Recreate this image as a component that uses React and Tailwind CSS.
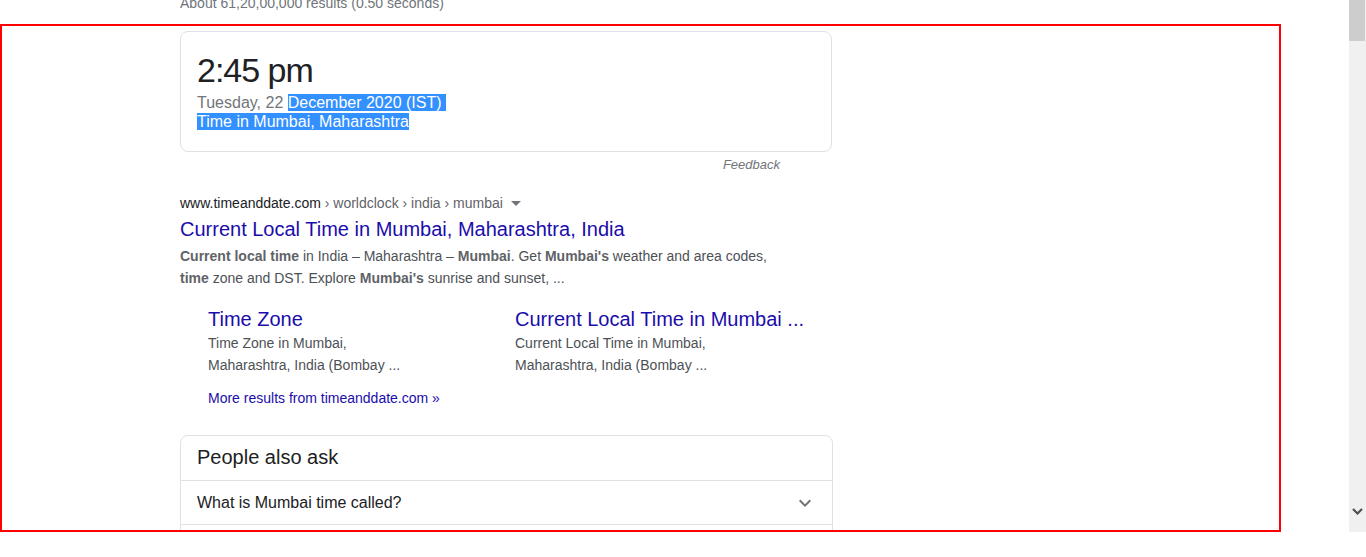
import React from "react";

function Chevron({ className }) {
  return (
    <svg viewBox="0 0 24 24" width="24" height="24" className={className} fill="currentColor">
      <path d="M7.41 8.59 12 13.17l4.59-4.58L18 10l-6 6-6-6z" />
    </svg>
  );
}

export default function App() {
  return (
    <div className="relative w-[1366px] h-[557px] bg-white overflow-hidden font-['Liberation_Sans',Arial,sans-serif]">
      <div className="flex h-[532px]">
        <div className="relative w-[1349px] h-[532px] overflow-hidden">
          <div className="ml-[180px] w-[653px] -mt-[7px]">
            <div className="h-[20px] leading-[20px] text-[14px] text-[#70757a]">
              About 61,20,00,000 results (0.50 seconds)
            </div>

            <div className="mt-[18px] w-[652px] rounded-[8px] border border-[#dfe1e5] px-[16px] pt-[16px] pb-[20px]">
              <div className="text-[34px] leading-[44px] tracking-[-1px] text-[#202124]">2:45 pm</div>
              <div className="mt-[1px] text-[16px] leading-[19px] text-[#70757a]">
                Tuesday, 22 <span className="bg-[#3390ff] text-white">December 2020 (IST)&nbsp;</span>
                <br />
                <span className="bg-[#3390ff] text-white">Time in Mumbai, Maharashtra</span>
              </div>
            </div>

            <div className="mt-[5px] w-[652px] pr-[52px] text-right text-[13px] leading-[16px] italic text-[#70757a]">
              Feedback
            </div>

            <div className="mt-[20px] flex items-center text-[14px] leading-[20px]">
              <span className="text-[#202124]">www.timeanddate.com</span>
              <span className="text-[#5f6368]">&nbsp;› worldclock › india › mumbai</span>
              <svg width="10" height="5" viewBox="0 0 10 5" className="ml-[8px] mt-[1px]">
                <path d="M0 0h10L5 5z" fill="#70757a" />
              </svg>
            </div>
            <div className="mt-[3px] text-[20px] leading-[26px] text-[#1a0dab]">
              Current Local Time in Mumbai, Maharashtra, India
            </div>
            <div className="mt-[3px] w-[600px] text-[14px] leading-[22px] text-[#4d5156]">
              <b className="text-[#5f6368]">Current local time</b> in India – Maharashtra – <b className="text-[#5f6368]">Mumbai</b>. Get <b className="text-[#5f6368]">Mumbai's</b> weather and area codes,
              <br />
              <b className="text-[#5f6368]">time</b> zone and DST. Explore <b className="text-[#5f6368]">Mumbai's</b> sunrise and sunset, ...
            </div>

            <div className="mt-[17px] ml-[28px] flex">
              <div className="w-[307px]">
                <div className="text-[20px] leading-[26px] text-[#1a0dab]">Time Zone</div>
                <div className="text-[14px] leading-[22px] text-[#4d5156]">
                  Time Zone in Mumbai,
                  <br />
                  Maharashtra, India (Bombay ...
                </div>
              </div>
              <div className="w-[310px]">
                <div className="text-[20px] leading-[26px] text-[#1a0dab] whitespace-nowrap">Current Local Time in Mumbai ...</div>
                <div className="text-[14px] leading-[22px] text-[#4d5156]">
                  Current Local Time in Mumbai,
                  <br />
                  Maharashtra, India (Bombay ...
                </div>
              </div>
            </div>
            <div className="mt-[11px] ml-[28px] text-[14px] leading-[22px] text-[#1a0dab]">
              More results from timeanddate.com »
            </div>

            <div className="mt-[26px] w-[653px] rounded-[8px] border border-[#dfe1e5]">
              <div className="px-[16px] pt-[8px] pb-[10px] text-[20px] leading-[26px] text-[#202124] border-b border-[#dfe1e5]">
                People also ask
              </div>
              <div className="flex items-center justify-between pl-[16px] pr-[15px] pt-[12px] pb-[11px] border-b border-[#dfe1e5]">
                <span className="text-[16px] leading-[20px] text-[#202124]">What is Mumbai time called?</span>
                <Chevron className="text-[#70757a] w-[24px] h-[24px] -my-[2px]" />
              </div>
              <div className="px-[16px] py-[12px] text-[16px] leading-[20px] text-[#202124]">
                What is the current time in India?
              </div>
            </div>
          </div>

          <div className="absolute left-0 top-[24px] w-[1281px] h-[508px] border-2 border-[#ff0000] pointer-events-none" />
        </div>

        <div className="w-[17px] h-[532px] bg-[#f0f0f0] flex flex-col justify-between">
          <div className="w-[16px] h-[41px] bg-[#cdcdcd]" />
          <div className="flex justify-center pb-[17px]">
            <svg width="11" height="7" viewBox="0 0 11 7">
              <path d="M1 1l4.5 4.5L10 1" stroke="#505050" strokeWidth="2.2" fill="none" />
            </svg>
          </div>
        </div>
      </div>
    </div>
  );
}
